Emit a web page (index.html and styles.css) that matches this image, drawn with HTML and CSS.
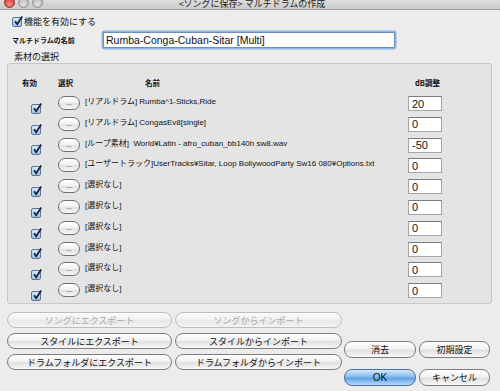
FILE: index.html
```html
<!DOCTYPE html>
<html lang="ja">
<head>
    <meta charset="UTF-8">
    <title>マルチドラムの作成</title>
    <link rel="stylesheet" href="styles.css">
</head>
<body>
<div class="window">
    <div class="titlebar">
        <div class="lights">
            <span class="light red"></span>
            <span class="light"></span>
            <span class="light"></span>
        </div>
        <div class="title">&lt;ソングに保存&gt; マルチドラムの作成</div>
    </div>

    <div class="content">
        <label class="enable">
            <span class="cb"><svg viewBox="0 0 10 10"><path d="M2 5.2l2.2 3L9.2 0.6"/></svg></span>
            機能を有効にする
        </label>

        <div class="name-row">
            <span class="name-label">マルチドラムの名前</span>
            <input type="text" class="name-input" value="Rumba-Conga-Cuban-Sitar [Multi]">
        </div>

        <div class="legend">素材の選択</div>

        <div class="group">
            <div class="head">
                <span class="h-on">有効</span>
                <span class="h-sel">選択</span>
                <span class="h-name">名前</span>
                <span class="h-db">dB調整</span>
            </div>

            <div id="rows"></div>
        </div>

        <div class="bottom">
            <div class="left-buttons">
                <button class="btn" disabled>ソングにエクスポート</button>
                <button class="btn" disabled>ソングからインポート</button>
                <button class="btn">スタイルにエクスポート</button>
                <button class="btn">スタイルからインポート</button>
                <button class="btn">ドラムフォルダにエクスポート</button>
                <button class="btn">ドラムフォルダからインポート</button>
            </div>
            <div class="right-buttons">
                <button class="btn">消去</button>
                <button class="btn">初期設定</button>
                <button class="btn default">OK</button>
                <button class="btn">キャンセル</button>
            </div>
        </div>
    </div>
</div>

<script>
    const items = [
        ["[リアルドラム] Rumba^1-Sticks,Ride", "20"],
        ["[リアルドラム] CongasEv8[single]", "0"],
        ["[ループ素材]  World¥Latin - afro_cuban_bb140h sw8.wav", "-50"],
        ["[ユーザートラック]UserTracks¥Sitar, Loop BollywoodParty Sw16 080¥Options.txt", "0"],
        ["[選択なし]", "0"],
        ["[選択なし]", "0"],
        ["[選択なし]", "0"],
        ["[選択なし]", "0"],
        ["[選択なし]", "0"],
        ["[選択なし]", "0"]
    ];

    const rowsDiv = document.getElementById('rows');
    items.forEach(item => {
        const row = document.createElement('div');
        row.className = 'row';
        row.innerHTML = `
            <span class="cell-cb"><span class="cb"><svg viewBox="0 0 10 10"><path d="M2 5.2l2.2 3L9.2 0.6"/></svg></span></span>
            <button class="dots">...</button>
            <span class="item-name"></span>
            <input type="text" class="db" value="${item[1]}">`;
        row.querySelector('.item-name').textContent = item[0];
        rowsDiv.appendChild(row);
    });
</script>
</body>
</html>
```

FILE: styles.css
```css
* {
    margin: 0;
    padding: 0;
    box-sizing: border-box;
}
body {
    font-family: "Liberation Sans", "Noto Sans CJK JP", sans-serif;
    background-color: #ececec;
    color: #111;
    width: 500px;
    height: 391px;
    overflow: hidden;
}
.window {
    height: 391px;
}
.titlebar {
    position: relative;
    height: 13px;
    background: linear-gradient(#e2e2e2, #cbcbcb);
    border-bottom: 1px solid #9c9c9c;
}
.lights {
    display: flex;
    gap: 3px;
    padding-left: 4px;
    margin-top: -3px;
}
.light {
    width: 11px;
    height: 11px;
    border-radius: 50%;
    background: radial-gradient(circle at 50% 70%, #e6e6e6, #a9a9a9);
    border: 1px solid #8d8d8d;
}
.light.red {
    background: radial-gradient(circle at 50% 70%, #ff8f86, #c9231a);
    border-color: #8e2a24;
}
.title {
    position: absolute;
    left: 0;
    right: 0;
    top: 1px;
    text-align: center;
    font-family: "Noto Sans CJK JP", sans-serif;
    font-size: 9px;
    line-height: 11px;
    color: #222;
    padding-left: 4px;
}
.content {
    padding: 0 8px 0 7px;
}

/* checkboxes */
.cb {
    display: inline-block;
    position: relative;
    width: 10px;
    height: 10px;
    border: 1px solid #5d7593;
    border-radius: 2px;
    background: linear-gradient(#d7e8f8, #9cc3ea);
    vertical-align: middle;
}
.cb svg {
    position: absolute;
    left: 0;
    top: -2px;
    width: 10px;
    height: 10px;
    overflow: visible;
}
.cb path {
    fill: none;
    stroke: #14243d;
    stroke-width: 1.8;
}

.enable {
    display: flex;
    align-items: center;
    gap: 2px;
    margin-top: 6px;
    padding-left: 5px;
    font-family: "Noto Sans CJK JP", sans-serif;
    font-size: 9px;
    line-height: 12px;
}
.name-row {
    display: flex;
    align-items: center;
    margin-top: 4px;
    padding-left: 5px;
}
.name-label {
    width: 91px;
    font-family: "Noto Sans CJK JP", sans-serif;
    font-size: 7px;
    font-weight: bold;
}
.name-input {
    width: 292px;
    height: 16px;
    border: 1px solid #6f8fb8;
    box-shadow: 0 0 0 1.5px #8db4e4;
    border-radius: 1px;
    padding-left: 2px;
    font-family: "Liberation Sans", sans-serif;
    font-size: 10.5px;
    color: #111;
    outline: none;
}
.legend {
    margin-top: 4px;
    padding-left: 7px;
    font-family: "Noto Sans CJK JP", sans-serif;
    font-size: 9px;
    line-height: 10px;
}
.group {
    margin-top: 1px;
    height: 241px;
    background-color: #e4e4e4;
    border: 1px solid #c6c6c6;
    border-radius: 3px;
}
.head {
    display: flex;
    padding-top: 14px;
    font-family: "Noto Sans CJK JP", sans-serif;
    font-size: 7.5px;
    font-weight: bold;
    line-height: 10px;
}
.h-on { margin-left: 14px; width: 36px; }
.h-sel { width: 87px; }
.h-name { width: 270px; }
.h-db { width: 40px; }

#rows {
    margin-top: 8px;
}
.row {
    display: flex;
    align-items: flex-start;
    height: 20.8px;
}
.cell-cb {
    width: 50px;
    padding-left: 23px;
    padding-top: 3px;
}
.dots {
    width: 22px;
    height: 14px;
    border: 1px solid #6f6f6f;
    border-radius: 7px;
    background: linear-gradient(#ffffff, #f1f1f1 50%, #e2e2e2 55%, #f8f8f8);
    font-size: 7px;
    line-height: 10px;
    color: #333;
}
.item-name {
    width: 328px;
    padding-left: 5px;
    padding-top: 1px;
    font-size: 8px;
    line-height: 10px;
    white-space: pre;
}
.db {
    width: 34px;
    height: 15px;
    border: 1px solid #a5a5a5;
    border-top-color: #7c7c7c;
    background: #fff;
    padding-left: 3px;
    font-family: "Liberation Sans", sans-serif;
    font-size: 11px;
    color: #111;
    outline: none;
}

/* bottom buttons */
.bottom {
    display: flex;
    align-items: flex-start;
    margin-top: 8px;
}
.left-buttons {
    display: grid;
    grid-template-columns: 165px 167px;
    column-gap: 3px;
    row-gap: 5px;
}
.right-buttons {
    display: grid;
    grid-template-columns: 72px 71px;
    column-gap: 3px;
    row-gap: 11px;
    margin-top: 29px;
    margin-left: 2px;
}
.btn {
    height: 16px;
    border: 1px solid #7d7d7d;
    border-radius: 8px;
    background: linear-gradient(#ffffff, #f2f2f2 45%, #e1e1e1 55%, #f7f7f7);
    font-family: "Noto Sans CJK JP", sans-serif;
    font-size: 9px;
    line-height: 13px;
    color: #111;
}
.right-buttons .btn {
    height: 17px;
}
.btn:disabled {
    color: #a9a9a9;
    border-color: #bdbdbd;
    background: linear-gradient(#fbfbfb, #f0f0f0 50%, #e7e7e7 55%, #f4f4f4);
}
.btn.default {
    border-color: #50739e;
    background: linear-gradient(#d5e8fb, #86bbee 45%, #5fa2e6 55%, #b6dafb);
    font-family: "Liberation Sans", sans-serif;
    font-size: 10px;
}
```
